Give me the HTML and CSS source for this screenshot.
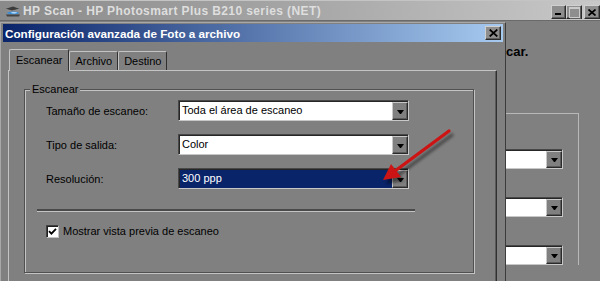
FILE: index.html
```html
<!DOCTYPE html>
<html lang="es">
 <head>
  <meta charset="UTF-8">
  <meta name="viewport" content="width=device-width, initial-scale=1.0">
  <title>HP Scan</title>
  <link rel="stylesheet" href="styles.css">
 </head>
 <body>
  <div class="screen">
   <div class="app-title">
    <svg class="app-icon" width="17" height="11" viewBox="0 0 17 11">
     <path d="M1 3 L9 0.5 L16 3 L8 5 Z" fill="#3c3c3c"/>
     <path d="M1 3 L8 5 L16 3" stroke="#9a9a9a" stroke-width="0.8" fill="none"/>
     <ellipse cx="9" cy="7" rx="6" ry="1.5" fill="#3f8fd8"/>
     <ellipse cx="10" cy="6.8" rx="3" ry="0.7" fill="#b8e0ff"/>
     <path d="M2 8.5 L16 8.5 L15 10.5 L3 10.5 Z" fill="#454545"/>
    </svg>
    <span class="app-title-text">HP Scan - HP Photosmart Plus B210 series (NET)</span>
    <div class="win-buttons">
     <span class="win-btn btn-min"></span>
     <span class="win-btn btn-max"></span>
     <span class="win-btn btn-close">
      <svg width="8" height="7" viewBox="0 0 8 7"><path d="M0.5 0.5 L7.5 6.5 M7.5 0.5 L0.5 6.5" stroke="#000" stroke-width="1.7"/></svg>
     </span>
    </div>
   </div>

   <div class="app-main">
    <div class="dialog">
     <div class="dialog-title">
      <span>Configuración avanzada de Foto a archivo</span>
      <span class="win-btn dlg-close">
       <svg width="9" height="8" viewBox="0 0 9 8"><path d="M0.7 0.5 L8.3 7.5 M8.3 0.5 L0.7 7.5" stroke="#000" stroke-width="1.7"/></svg>
      </span>
     </div>

     <div class="tabs">
      <div class="tab active">Escanear</div>
      <div class="tab">Archivo</div>
      <div class="tab">Destino</div>
     </div>

     <div class="tab-panel">
      <div class="group">
       <div class="group-title">Escanear</div>
       <div class="fields">
        <label>Tamaño de escaneo:</label>
        <div class="combo">
         <span class="combo-value">Toda el área de escaneo</span>
         <span class="combo-btn"></span>
        </div>
        <label>Tipo de salida:</label>
        <div class="combo">
         <span class="combo-value">Color</span>
         <span class="combo-btn"></span>
        </div>
        <label>Resolución:</label>
        <div class="combo selected">
         <span class="combo-value">300 ppp</span>
         <span class="combo-btn"></span>
        </div>
       </div>
       <div class="separator"></div>
       <label class="check">
        <span class="check-box">
         <svg width="9" height="9" viewBox="0 0 9 9"><path d="M1 4.2 L3.4 6.6 L8 1.8" stroke="#000" stroke-width="1.8" fill="none"/></svg>
        </span>
        Mostrar vista previa de escaneo
       </label>
      </div>
     </div>
    </div>

    <div class="app-side">
     <p class="app-hint">car.</p>
     <div class="app-box">
      <div class="combo combo-sm"><span class="combo-value"></span><span class="combo-btn"></span></div>
      <div class="combo combo-sm"><span class="combo-value"></span><span class="combo-btn"></span></div>
      <div class="combo combo-sm"><span class="combo-value"></span><span class="combo-btn"></span></div>
     </div>
    </div>
   </div>

   <!-- red pointer drawn over the screenshot -->
   <svg class="pointer" width="600" height="281" viewBox="0 0 600 281">
    <defs>
     <filter id="soft" x="-20%" y="-20%" width="140%" height="140%"><feGaussianBlur stdDeviation="1.6"/></filter>
    </defs>
    <g filter="url(#soft)" opacity="0.45" transform="translate(3 4)">
     <line x1="449" y1="131" x2="395" y2="171" stroke="#000" stroke-width="3.4" stroke-linecap="round"/>
     <polygon points="383,180 391,164 401,177" fill="#000"/>
    </g>
    <line x1="449" y1="131" x2="395" y2="171" stroke="#cc1414" stroke-width="3.4" stroke-linecap="round"/>
    <polygon points="383,180 391,164 401,177" fill="#cc1414"/>
   </svg>
  </div>
 </body>
</html>
```

FILE: styles.css
```css
* {
    margin: 0;
    padding: 0;
    box-sizing: border-box;
}

body {
    background: #808080;
    font-family: 'Liberation Sans', Arial, sans-serif;
    font-size: 11px;
    color: #000;
}

.screen {
    width: 600px;
    height: 281px;
    overflow: hidden;
    position: relative;
    background: #808080;
}

/* main window title */
.app-title {
    height: 21px;
    display: flex;
    align-items: center;
    padding-left: 4px;
    background: linear-gradient(90deg, #8a8a8a 0%, #a6a6a6 50%, #c8c8c8 100%);
    border-top: 1px solid #c4c4c4;
    border-bottom: 1px solid #6a6a6a;
}

.app-icon {
    flex: none;
    margin-right: 2px;
    margin-top: 1px;
}

.app-title-text {
    flex: 1;
    font-size: 12px;
    font-weight: bold;
    letter-spacing: 0.4px;
    color: #dedede;
    padding-top: 1px;
    white-space: nowrap;
}

.win-buttons {
    display: flex;
    align-self: flex-start;
    margin-top: 4px;
}

.win-btn {
    width: 16px;
    height: 14px;
    display: flex;
    align-items: center;
    justify-content: center;
    background: #8e8e8e;
    border: 1px solid;
    border-color: #d0d0d0 #2a2a2a #2a2a2a #d0d0d0;
    box-shadow: inset -1px -1px 0 #5e5e5e;
}

.btn-min {
    width: 15px;
    align-items: flex-end;
    justify-content: flex-start;
}

.btn-min::after {
    content: "";
    width: 6px;
    height: 2px;
    background: #000;
    margin: 0 0 3px 3px;
}

.btn-max::after {
    content: "";
    width: 9px;
    height: 8px;
    border: 1px solid #cacaca;
    border-top-width: 2px;
    box-shadow: 1px 1px 0 #5e5e5e;
}

.btn-close {
    margin-left: 2px;
}

/* main window content */
.app-main {
    display: flex;
    height: 260px;
}

.dialog {
    flex: none;
    width: 506px;
    height: 270px;
    margin-top: 1px;
    padding: 1px 2px;
    display: flex;
    flex-direction: column;
    border: 1px solid #3c3c3c;
    border-top-color: #a8a8a8;
    border-left-color: #a8a8a8;
}

.dialog-title {
    height: 18px;
    display: flex;
    align-items: center;
    justify-content: space-between;
    padding: 0 2px;
    background: linear-gradient(90deg, #0a246a 0%, #a6caf0 100%);
    color: #fff;
    font-size: 11.7px;
    font-weight: bold;
    white-space: nowrap;
}

.tabs {
    height: 28px;
    display: flex;
    align-items: flex-end;
    padding-left: 6px;
}

.tab {
    height: 19px;
    display: flex;
    align-items: center;
    padding: 0 5px;
    border-top: 1px solid #c4c4c4;
    border-left: 1px solid #c4c4c4;
    border-right: 1px solid #303030;
    border-radius: 2px 2px 0 0;
    background: #808080;
}

.tab.active {
    height: 22px;
    margin-bottom: -1px;
    padding: 0 6px 1px 6px;
    position: relative;
    z-index: 1;
}

.tab-panel {
    flex: 1;
    margin: 0 6px 0 5px;
    padding: 18px 22px 0 15px;
    border-top: 1px solid #c4c4c4;
    border-left: 1px solid #c4c4c4;
    border-right: 1px solid #303030;
    box-shadow: inset -1px 0 0 #5a5a5a;
}

.group {
    height: 184px;
    padding-left: 21px;
    border: 1px solid #505050;
    box-shadow: 1px 1px 0 #c4c4c4, inset 1px 1px 0 #c4c4c4;
}

.group-title {
    width: fit-content;
    margin: -7px 0 0 -16px;
    padding: 0 2px;
    line-height: 13px;
    background: #808080;
}

.fields {
    display: grid;
    grid-template-columns: 132px 231px;
    grid-auto-rows: 21px;
    row-gap: 13px;
    align-items: center;
    margin-top: 4px;
}

.combo {
    height: 21px;
    display: flex;
    border: 1px solid;
    border-color: #484848 #c8c8c8 #c8c8c8 #484848;
    box-shadow: inset 1px 1px 0 #262626;
    padding: 1px 0 0 1px;
    background: #808080;
}

.combo-value {
    flex: 1;
    background: #fff;
    padding-left: 2px;
    line-height: 17px;
    white-space: nowrap;
    overflow: hidden;
}

.combo.selected .combo-value {
    background: #0a246a;
    color: #fff;
}

.combo-btn {
    width: 16px;
    flex: none;
    display: flex;
    align-items: center;
    justify-content: center;
    background: #808080;
    border: 1px solid;
    border-color: #c8c8c8 #2a2a2a #2a2a2a #c8c8c8;
    box-shadow: inset -1px -1px 0 #5a5a5a;
}

.combo-btn::after {
    content: "";
    width: 1px;
    border-left: 3px solid transparent;
    border-right: 3px solid transparent;
    border-top: 4px solid #000;
    box-sizing: content-box;
    margin-top: 1px;
}

.separator {
    width: 378px;
    margin: 20px 0 0 -9px;
    border-top: 2px solid #4a4a4a;
    border-bottom: 1px solid #c4c4c4;
}

.check {
    display: flex;
    align-items: center;
    gap: 4px;
    margin-top: 13px;
    line-height: 13px;
}

.check-box {
    width: 13px;
    height: 13px;
    display: flex;
    align-items: center;
    justify-content: center;
    background: #fff;
    border: 1px solid;
    border-color: #404040 #c4c4c4 #c4c4c4 #404040;
    box-shadow: inset 1px 1px 0 #202020;
}

/* strip of the main window beside the dialog */
.app-side {
    flex: 1;
    overflow: hidden;
}

.app-hint {
    margin-top: 23px;
    font-size: 13px;
    font-weight: bold;
    line-height: 15px;
    white-space: nowrap;
}

.app-box {
    width: 98px;
    margin: 54px 0 0 -25px;
    padding: 35px 15px 0 0;
    display: flex;
    flex-direction: column;
    gap: 28px;
    border-top: 1px solid #b8b8b8;
    border-right: 1px solid #b8b8b8;
}

.combo-sm {
    height: 20px;
}

.pointer {
    position: absolute;
    left: 0;
    top: 0;
    pointer-events: none;
}
```
